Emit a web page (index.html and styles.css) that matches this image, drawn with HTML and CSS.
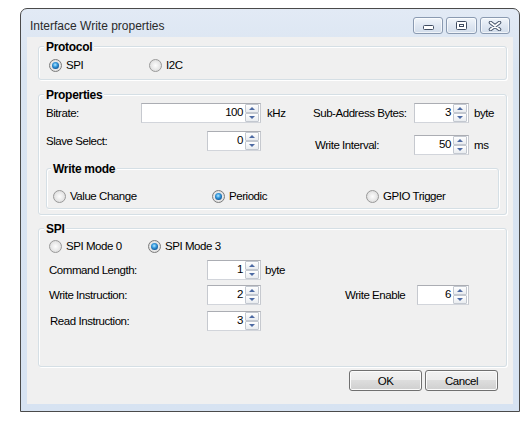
FILE: index.html
```html
<!DOCTYPE html>
<html>
<head>
<meta charset="utf-8">
<link rel="stylesheet" href="styles.css">
</head>
<body>
<div class="window">
  <div class="titlebar">
    <span class="title">Interface Write properties</span>
    <div class="caption-btns">
      <span class="cbtn min"><svg width="11" height="5" viewBox="0 0 11 5"><rect x="0.5" y="0.5" width="10" height="4" rx="1" fill="#fff" stroke="#3f4c61"/></svg></span>
      <span class="cbtn max"><svg width="11" height="9" viewBox="0 0 11 9"><rect x="0.5" y="0.5" width="10" height="8" rx="1" fill="#fff" stroke="#3f4c61"/><rect x="3.5" y="3.5" width="4" height="2" fill="#fff" stroke="#3f4c61"/></svg></span>
      <span class="cbtn close"><svg width="14" height="10" viewBox="0 0 14 10"><path d="M2.5 1.5 L11.5 8.5 M11.5 1.5 L2.5 8.5" stroke="#4a586e" stroke-width="3.6" stroke-linecap="round" fill="none"/><path d="M2.5 1.5 L11.5 8.5 M11.5 1.5 L2.5 8.5" stroke="#fff" stroke-width="1.6" stroke-linecap="round" fill="none"/></svg></span>
    </div>
  </div>
  <div class="client">
    <div class="group protocol">
      <div class="legend">Protocol</div>
      <div class="radio-row">
        <label class="opt w100"><span class="radio on"></span>SPI</label>
        <label class="opt"><span class="radio"></span>I2C</label>
      </div>
    </div>

    <div class="group props">
      <div class="legend">Properties</div>
      <div class="pgrid">
        <span class="lbl">Bitrate:</span>
        <div class="fcell"><div class="spin w120"><span class="val">100</span><span class="arrows"><span class="ab up"></span><span class="ab dn"></span></span></div></div>
        <span class="unit">kHz</span>
        <span class="lbl">Sub-Address Bytes:</span>
        <div class="spin w55"><span class="val">3</span><span class="arrows"><span class="ab up"></span><span class="ab dn"></span></span></div>
        <span class="unit u5">byte</span>

        <span class="lbl">Slave Select:</span>
        <div class="fcell"><div class="spin w54"><span class="val">0</span><span class="arrows"><span class="ab up"></span><span class="ab dn"></span></span></div></div>
        <span></span>
        <span class="lbl ind2 off">Write Interval:</span>
        <div class="spin w55 off"><span class="val">50</span><span class="arrows"><span class="ab up"></span><span class="ab dn"></span></span></div>
        <span class="unit u5 off">ms</span>
      </div>

      <div class="group wmode">
        <div class="legend">Write mode</div>
        <div class="wrow">
          <label class="opt"><span class="radio"></span>Value Change</label>
          <label class="opt"><span class="radio on"></span>Periodic</label>
          <label class="opt"><span class="radio"></span>GPIO Trigger</label>
        </div>
      </div>
    </div>

    <div class="group spi">
      <div class="legend">SPI</div>
      <div class="radio-row">
        <label class="opt w99"><span class="radio"></span>SPI Mode 0</label>
        <label class="opt"><span class="radio on"></span>SPI Mode 3</label>
      </div>
      <div class="sgrid">
        <span class="lbl">Command Length:</span>
        <div class="spin w54"><span class="val">1</span><span class="arrows"><span class="ab up"></span><span class="ab dn"></span></span></div>
        <span class="unit u4">byte</span>
        <span></span>
        <span></span>

        <span class="lbl">Write Instruction:</span>
        <div class="spin w54"><span class="val">2</span><span class="arrows"><span class="ab up"></span><span class="ab dn"></span></span></div>
        <span></span>
        <span class="lbl">Write Enable</span>
        <div class="spin w52"><span class="val">6</span><span class="arrows"><span class="ab up"></span><span class="ab dn"></span></span></div>

        <span class="lbl ind1">Read Instruction:</span>
        <div class="spin w54"><span class="val">3</span><span class="arrows"><span class="ab up"></span><span class="ab dn"></span></span></div>
        <span></span>
        <span></span>
        <span></span>
      </div>
    </div>

    <div class="btnrow">
      <button class="btn">OK</button>
      <button class="btn">Cancel</button>
    </div>
  </div>
</div>
</body>
</html>
```

FILE: styles.css
```css
* { box-sizing: border-box; }

body {
  margin: 0;
  background: #fff;
  font-family: "Liberation Sans", Arial, sans-serif;
  font-size: 11.5px;
  letter-spacing: -0.45px;
  color: #000;
}

.window {
  margin: 8px 0 0 20px;
  width: 500px;
  height: 404px;
  border: 1px solid #4a4a4a;
  border-radius: 7px 7px 0 0;
  background: linear-gradient(#e2eaf5, #d9e4f1 60px, #d7e3f2);
  display: flex;
  flex-direction: column;
}

.titlebar {
  flex: none;
  height: 28px;
  display: flex;
  justify-content: space-between;
  align-items: flex-start;
  padding: 0 9px;
}

.title {
  margin-top: 10px;
  font-size: 12px;
  line-height: 15px;
  letter-spacing: 0;
  color: #2a2a2a;
}

.caption-btns {
  display: flex;
  gap: 3px;
  margin-top: 8px;
}

.cbtn {
  height: 17px;
  border: 1px solid #8a9ab1;
  border-radius: 3px;
  background: linear-gradient(#f2f6fb, #dfe7f2 50%, #d2ddeb);
  box-shadow: inset 0 0 0 1px rgba(255, 255, 255, 0.65);
  display: flex;
  align-items: center;
  justify-content: center;
}

.cbtn svg { display: block; }

.cbtn.min { width: 30px; align-items: flex-end; padding-bottom: 3px; }
.cbtn.max { width: 31px; }
.cbtn.close { width: 30px; }

.client {
  flex: 1;
  margin: 0 6px 7px;
  background: #f0f0f0;
  padding: 9px 6px 0 11px;
  display: flex;
  flex-direction: column;
}

.group {
  border: 1px solid #d5dfe5;
  border-radius: 3px;
  box-shadow: 1px 1px 0 #fff, inset 1px 1px 0 #fff;
  display: flex;
  flex-direction: column;
  align-items: flex-start;
}

.legend {
  margin: -6px 0 0 5px;
  padding: 0 2px;
  background: #f0f0f0;
  font-weight: bold;
  font-size: 12px;
  line-height: 13px;
  letter-spacing: -0.3px;
}

.protocol { padding-bottom: 7px; }

.radio-row {
  display: flex;
  margin: 5px 0 0 10px;
}

.opt {
  display: flex;
  align-items: center;
  gap: 4px;
  line-height: 13px;
  white-space: nowrap;
}

.w100 { width: 100px; }
.w99 { width: 99px; }

.radio {
  flex: none;
  width: 13px;
  height: 13px;
  border-radius: 50%;
  border: 1px solid #999;
  background: radial-gradient(circle at 50% 50%, #fdfdfd 0%, #e9e9e9 50%, #d3d3d3 100%);
  display: flex;
  align-items: center;
  justify-content: center;
}

.radio.on { border-color: #7c7c7c; }

.radio.on::after {
  content: "";
  width: 7px;
  height: 7px;
  border-radius: 50%;
  background: radial-gradient(circle at 45% 40%, #b8e8ff 0%, #3a9ee0 35%, #10599c 72%, #0b3a6c 100%);
}

.props {
  margin-top: 14px;
  padding-bottom: 5px;
}

.pgrid {
  display: grid;
  grid-template-columns: 95px 120px 52px 101px 55px auto;
  grid-template-rows: 20px 24px;
  row-gap: 8px;
  margin: 1px 0 0 7px;
  align-items: start;
}

.lbl {
  line-height: 20px;
  white-space: nowrap;
}

.off { margin-top: 4px; }
.ind1 { padding-left: 1px; }
.ind2 { padding-left: 2px; }

.unit {
  line-height: 20px;
  padding-left: 6px;
  white-space: nowrap;
}
.unit.u5 { padding-left: 5px; }
.unit.u4 { padding-left: 4px; }

.fcell {
  display: flex;
  justify-content: flex-end;
}

.spin {
  height: 20px;
  display: flex;
  border: 1px solid;
  border-color: #abadb3 #c6c9cf #d2d5db #c6c9cf;
  background: #fff;
  padding: 0 1px 0 0;
}

.w120 { width: 120px; }
.w55 { width: 55px; }
.w54 { width: 54px; }
.w52 { width: 52px; }

.val {
  flex: 1;
  text-align: right;
  line-height: 17px;
  padding-right: 2px;
}

.arrows {
  flex: none;
  width: 14px;
  display: flex;
  flex-direction: column;
}

.ab {
  flex: 1;
  border: 1px solid #c3c8d0;
  border-radius: 1px;
  background: linear-gradient(#fefefe, #e9ecf0);
  display: flex;
  align-items: center;
  justify-content: center;
}

.ab::after {
  content: "";
  border-left: 3px solid transparent;
  border-right: 3px solid transparent;
  border-bottom: 3px solid #4d6aa3;
}

.ab.dn::after {
  border-bottom: 0;
  border-top: 3px solid #4d6aa3;
}

.wmode {
  align-self: stretch;
  margin: 13px 7px 0;
  padding-bottom: 5px;
}

.wmode .legend { margin-left: 4px; }

.wrow {
  display: grid;
  grid-template-columns: 159px 154px auto;
  margin: 14px 0 0 6px;
}

.spi {
  margin-top: 13px;
  padding-bottom: 35px;
}

.spi .radio-row { margin-top: 4px; }

.sgrid {
  display: grid;
  grid-template-columns: 158px 54px 84px 72px 52px;
  grid-template-rows: 20px 20px 21px;
  row-gap: 5px;
  margin: 7px 0 0 10px;
  align-items: end;
}

.btnrow {
  display: flex;
  justify-content: flex-end;
  gap: 3px;
  margin-top: 3px;
  padding-right: 9px;
}

.btn {
  width: 73px;
  height: 21px;
  padding: 0;
  border: 1px solid #707070;
  border-radius: 3px;
  background: linear-gradient(#f2f2f2 0%, #ebebeb 50%, #dddddd 50%, #cfcfcf 100%);
  box-shadow: inset 0 0 0 1px #fbfbfb;
  font-family: "Liberation Sans", Arial, sans-serif;
  font-size: 11.5px;
  letter-spacing: -0.45px;
  color: #000;
}
```
